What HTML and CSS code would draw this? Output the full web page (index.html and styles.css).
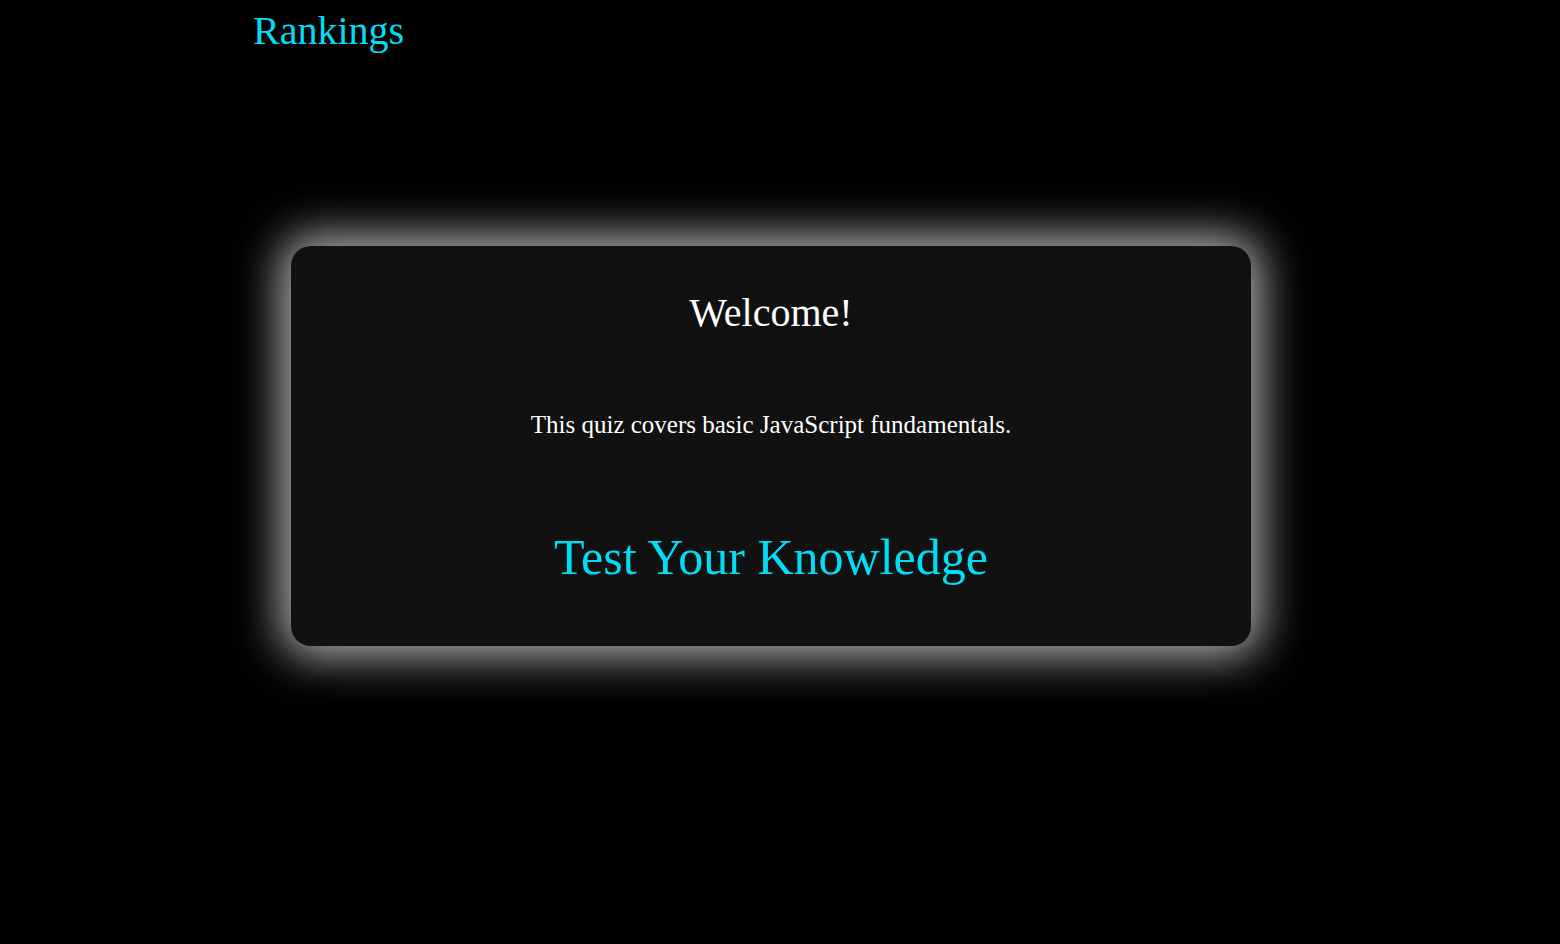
FILE: index.html
```html
<!DOCTYPE html>
<html lang="en">
<head>
<meta charset="utf-8">
<title>Quiz</title>
<link rel="stylesheet" href="styles.css">
</head>
<body>
<header class="top">
  <a class="nav-link" href="#">Rankings</a>
</header>
<main class="stage">
  <section class="card">
    <h1 class="title">Welcome!</h1>
    <p class="intro">This quiz covers basic JavaScript fundamentals.</p>
    <a class="start" href="#">Test Your Knowledge</a>
  </section>
</main>
</body>
</html>
```
FILE: styles.css
```css
html, body {
  margin: 0;
  padding: 0;
  background: #000;
  height: 100%;
}
body {
  font-family: "Liberation Serif", "Times New Roman", serif;
  color: #fff;
}
.top {
  padding: 9px 0 0 253px;
  height: 51px;
  display: flex;
  align-items: flex-start;
}
.nav-link {
  color: #00ddf5;
  text-decoration: none;
  font-size: 40px;
  line-height: 44px;
}
.stage {
  display: flex;
  justify-content: center;
  padding-top: 186px;
  padding-right: 18px;
}
.card {
  width: 960px;
  height: 400px;
  box-sizing: border-box;
  background: #111;
  border-radius: 20px;
  box-shadow: 0 0 45px 10px rgba(255, 255, 255, 0.7);
  display: flex;
  flex-direction: column;
  align-items: center;
  padding-top: 45px;
}
.title {
  margin: 0;
  font-weight: normal;
  font-size: 40px;
  line-height: 44px;
}
.intro {
  margin: 76px 0 0;
  font-size: 25px;
  line-height: 28px;
}
.start {
  margin-top: 91px;
  color: #00ddf5;
  text-decoration: none;
  font-size: 50px;
  line-height: 55px;
}
```
